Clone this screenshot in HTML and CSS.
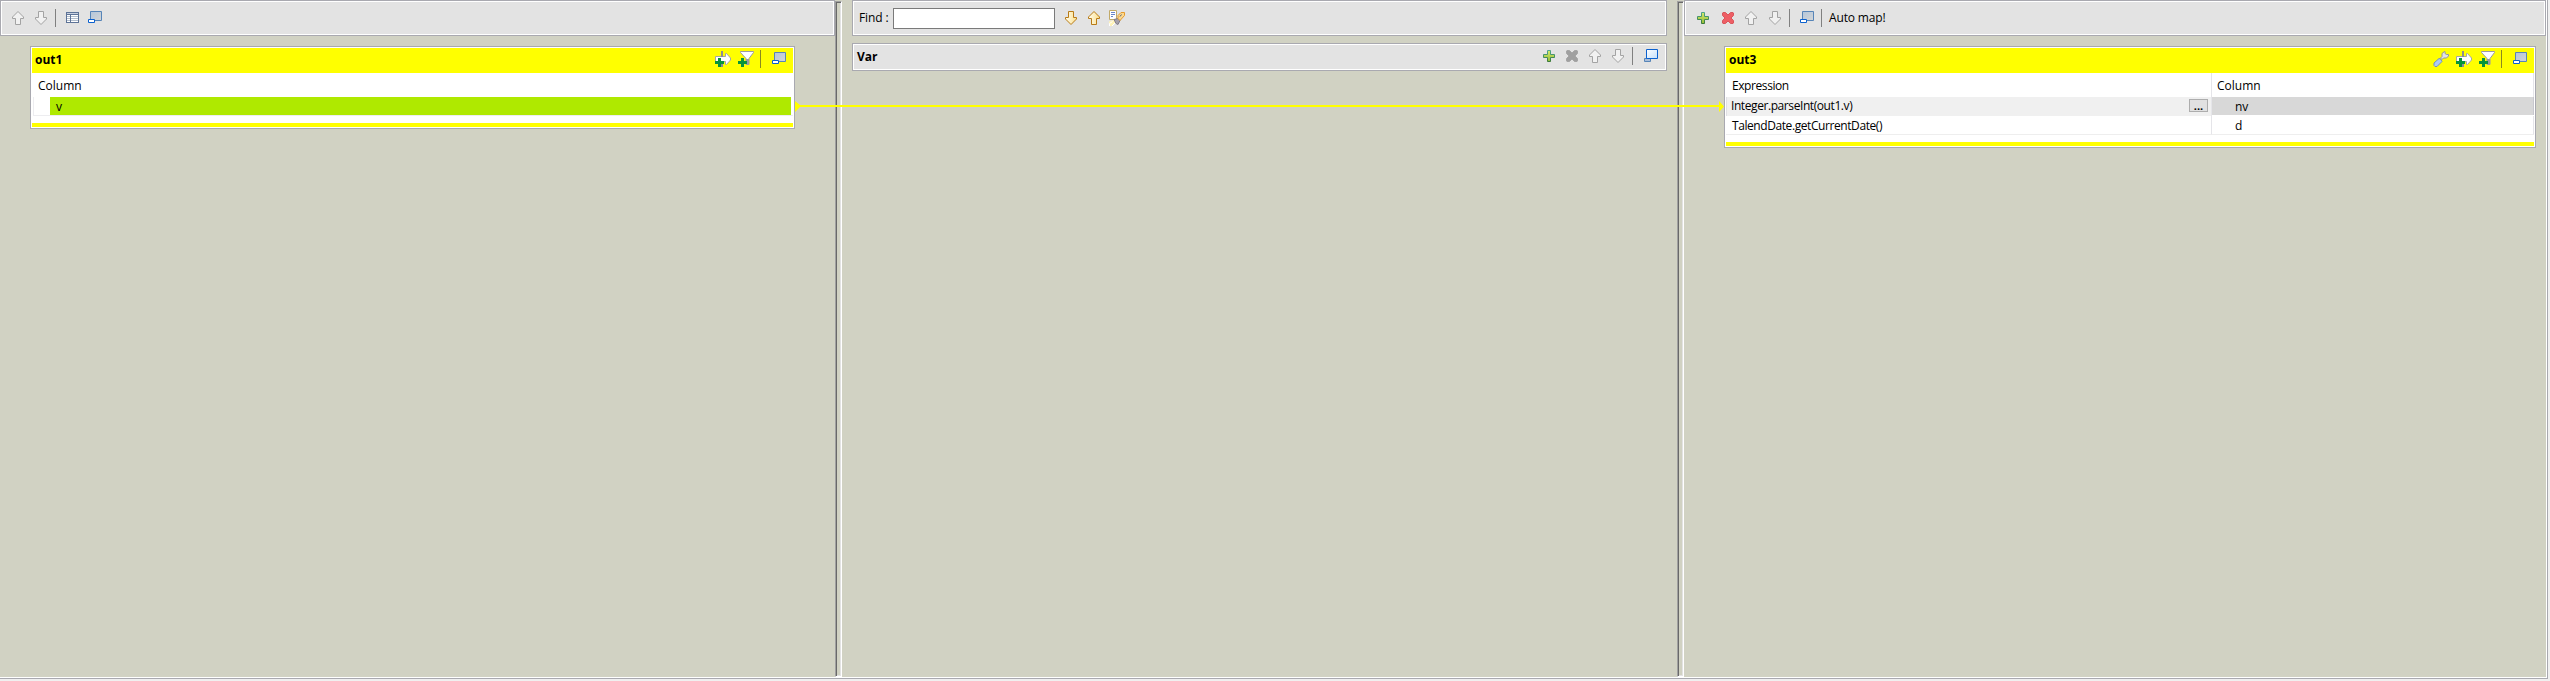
FILE: index.html
```html
<!DOCTYPE html>
<html lang="en">
<head>
<meta charset="utf-8">
<title>Map editor</title>
<link rel="stylesheet" href="styles.css">
</head>
<body>
<svg class="defs" width="0" height="0" aria-hidden="true">
  <defs>
    <linearGradient id="gold" x2="1"><stop offset="0" stop-color="#fffdf0"/><stop offset="1" stop-color="#fbdf8c"/></linearGradient>
    <linearGradient id="green" x2="0" y2="1"><stop offset="0" stop-color="#d5ea6c"/><stop offset="1" stop-color="#94bb35"/></linearGradient>
    <linearGradient id="greenEdge" x2="0" y2="1"><stop offset="0" stop-color="#4fa58c"/><stop offset="1" stop-color="#3b7a3b"/></linearGradient>
    <linearGradient id="pane" x2="1" y2="1"><stop offset="0" stop-color="#b4c6da"/><stop offset="1" stop-color="#d3d5d6"/></linearGradient>
    <linearGradient id="paneOn" x2="1" y2="1"><stop offset="0" stop-color="#ffffff"/><stop offset="1" stop-color="#c4e0fb"/></linearGradient>
    <symbol id="up" viewBox="0 0 16 16"><path d="M8 1.500 13.500 7v1.500h-3v6h-5v-6h-3V7z"/></symbol>
    <symbol id="down" viewBox="0 0 16 16"><path d="M8 14.500 13.500 9V7.500h-3v-6h-5v6h-3V9z"/></symbol>
    <symbol id="plus" viewBox="0 0 16 16"><path d="M6.500 2.500h3v4h4v3h-4v4h-3v-4h-4v-3h4z" fill="url(#green)" stroke="url(#greenEdge)"/></symbol>
    <symbol id="cross" viewBox="0 0 16 16"><path d="M3 2.500h2.500L8 5l2.500-2.500H13l.5.5v2.500L11 8l2.500 2.500V13l-.5.5h-2.500L8 11l-2.500 2.500H3l-.5-.5v-2.500L5 8 2.500 5.500V3z"/></symbol>
    <symbol id="table" viewBox="0 0 16 16"><path d="M2 2h13v11H2z" fill="#5d7397"/><path d="M3 3h11v1H3z" fill="#c6cfde"/><path d="M3 5h3v7H3zM7 5h7v7H7z" fill="#fff"/><path d="M3 6.500h3m1 0h7m-11 2h3m1 0h7m-11 2h3m1 0h7" stroke="#b1bdcc" fill="none"/></symbol>
    <symbol id="win" viewBox="0 0 16 16"><path d="M3.500 1.500h11v9h-11z" fill="url(#pane)" stroke="#5785b8"/><path d="M1.500 9.500h6v3h-6z" fill="#fff" stroke="#0b61cf"/></symbol>
    <symbol id="winOn" viewBox="0 0 16 16"><path d="M1.500 10.500h6v3h-6z" fill="#a9bdd8" stroke="#5785b8"/><path d="M3.500 1.500h11v9h-11z" fill="url(#paneOn)" stroke="#0b61cf"/></symbol>
    <symbol id="tool" viewBox="0 0 16 16"><path d="M11.500.5 9 2.500v3L7.500 7l1.500 1.500L10.500 7h3l2-2v-1.500h-2l-1.500-1V.5z" fill="#e2e3e6" stroke="#92949b"/><path d="M6 7.500 1 12v2.500l1 1h2l5-5-1.500-2.500z" fill="#adc9f2" stroke="#6f8fc4"/></symbol>
    <symbol id="addvar" viewBox="0 0 16 16"><path d="M7 0v16" stroke="#8e8e93" stroke-width="2"/><path d="M.5 5.500h10v-3h1l4 4.500v2l-4 4.500h-1v-3H.5z" fill="#fff" stroke="#a4a4a8"/><path d="M7 0v6" stroke="#8e8e93" stroke-width="2"/><path d="M3 7h3v3h3v3H6v3H3v-3H0v-3h3z" fill="#07943a"/></symbol>
    <symbol id="filter" viewBox="0 0 16 16"><path d="M2.500.5h13v1L11 7.500v6H8v-6L2.500 1.500z" fill="#fff" stroke="#9a9aa3"/><path d="M9.500 8v6" stroke="#9a9aa3" stroke-width="3"/><path d="M3 7h3v3h3v3H6v3H3v-3H0v-3h3z" fill="#07943a"/></symbol>
    <symbol id="torch" viewBox="0 0 16 16"><path d="M.5.5h7v9h-7z" fill="#fff" stroke="#c2aa68"/><path d="M2 2.500h4m-4 2h4m-4 2h2" stroke="#6a86c8"/><path d="M0 11.500 5 10l2 2-3.500 4H0z" fill="#fff3b8"/><path d="M.5 16v-2.500l3-2M3 16l3-3" stroke="#fff" fill="none"/><path d="m5 9.500 4-1 2 2-2 4-2-1z" fill="#a5a1ab" stroke="#827d8a"/><path d="M9 5.500 12 2.500h3.500v3l-4.500 5L9 8.500z" fill="#fbd78e" stroke="#e59a2c"/><path d="M11 6.500 12.500 4.500" stroke="#52617a"/></symbol>
  </defs>
</svg>

<main class="mapper">
  <section class="pane pane-in">
    <div class="bar tools tools-in">
      <svg class="icon dim"><use href="#up"/></svg>
      <svg class="icon dim g7"><use href="#down"/></svg>
      <i class="sep"></i>
      <svg class="icon g8"><use href="#table"/></svg>
      <svg class="icon g7"><use href="#win"/></svg>
    </div>
    <article class="card card-in">
      <header class="title"><b>out1</b>
        <svg class="icon push"><use href="#addvar"/></svg>
        <svg class="icon g7"><use href="#filter"/></svg>
        <i class="sep"></i>
        <svg class="icon g10"><use href="#win"/></svg>
      </header>
      <div class="body-in">
        <div class="head">Column</div>
        <div class="line"><span class="match">v</span></div>
      </div>
      <div class="foot"></div>
    </article>
  </section>
  <div class="sash"></div>
  <section class="pane pane-var">
    <div class="bar tools tools-find">
      <label class="find" for="find">Find :</label>
      <input id="find" class="field" type="text">
      <svg class="icon gold g8"><use href="#down"/></svg>
      <svg class="icon gold g7"><use href="#up"/></svg>
      <svg class="icon g7"><use href="#torch"/></svg>
    </div>
    <div class="bar var"><b>Var</b>
      <svg class="icon push"><use href="#plus"/></svg>
      <svg class="icon off g7"><use href="#cross"/></svg>
      <svg class="icon dim g7"><use href="#up"/></svg>
      <svg class="icon dim g7"><use href="#down"/></svg>
      <i class="sep"></i>
      <svg class="icon g10"><use href="#winOn"/></svg>
    </div>
  </section>
  <div class="sash"></div>
  <section class="pane pane-out">
    <div class="bar tools tools-out">
      <svg class="icon"><use href="#plus"/></svg>
      <svg class="icon red g9"><use href="#cross"/></svg>
      <svg class="icon dim g7"><use href="#up"/></svg>
      <svg class="icon dim g8"><use href="#down"/></svg>
      <i class="sep"></i>
      <svg class="icon g9"><use href="#win"/></svg>
      <i class="sep"></i>
      <span class="auto">Auto map!</span>
    </div>
    <article class="card card-out">
      <header class="title"><b>out3</b>
        <svg class="icon push"><use href="#tool"/></svg>
        <svg class="icon g7"><use href="#addvar"/></svg>
        <svg class="icon g7"><use href="#filter"/></svg>
        <i class="sep"></i>
        <svg class="icon g10"><use href="#win"/></svg>
      </header>
      <div class="grid">
        <div class="cell h tight">Expression</div>
        <div class="cell h c2">Column</div>
        <div class="cell active tight"><span>Integer.parseInt(out1.v)</span><button class="more">...</button></div>
        <div class="cell c2 chosen">nv</div>
        <div class="cell last tight">TalendDate.getCurrentDate()</div>
        <div class="cell c2 last">d</div>
      </div>
      <div class="foot"></div>
    </article>
  </section>
  <svg class="link" width="929" height="12" viewBox="0 0 929 12"><path d="M0 0 5 4h919V0l5 5.500-5 5.500V6H5L0 11z"/></svg>
</main>
</body>
</html>
```

FILE: styles.css
```css
* { box-sizing: border-box; }
body {
  margin: 0;
  height: 681px;
  overflow: hidden;
  background: #f0f0f0;
  color: #000;
  font: 12px/16px "Open Sans", "Noto Sans", sans-serif;
}
.defs { position: absolute; }
.mapper {
  position: relative;
  display: flex;
  width: 2548px;
  height: 679px;
  background: #d1d2c3;
  border: solid #a9a9b0;
  border-width: 0 1px 1px 0;
  box-shadow: inset -1px -1px #fff;
}
.pane { display: flex; flex-direction: column; }
.pane-in { width: 835px; }
.pane-var { width: 835px; padding: 0 10px; gap: 7px; }
.pane-out { width: 862px; }
.sash {
  width: 7px;
  height: 676px;
  margin-top: 1px;
  border: 1px solid;
  border-color: #a0a0a0 #fff #fff #a0a0a0;
  box-shadow: inset 1px 1px #696969, inset -1px -1px #e3e3e3;
}
.bar {
  display: flex;
  align-items: center;
  background: #e3e3e3;
  border: 1px solid #a9a9b0;
  box-shadow: inset 0 0 0 1px #fff;
}
.tools { height: 36px; }
.tools-in { padding-left: 9px; }
.tools-find { padding-left: 6px; }
.tools-out { padding-left: 10px; }
.var { height: 28px; padding: 0 7px 2px 4px; }
.var b { padding-top: 1px; }
.icon { flex: none; width: 16px; height: 16px; fill: none; }
.dim { fill: #f1f1f1; stroke: #a3a3a3; }
.gold { fill: url(#gold); stroke: #b97b16; }
.red { fill: #ee5f65; stroke: #d9565c; }
.off { fill: #a0a0a0; stroke: #a6a6a6; }
.g7 { margin-left: 7px; }
.g8 { margin-left: 8px; }
.g9 { margin-left: 9px; }
.g10 { margin-left: 10px; }
.push { margin-left: auto; }
.sep { width: 1px; height: 18px; margin-left: 6px; background: #808080; }
.find { width: 34px; white-space: nowrap; letter-spacing: -.1px; }
.field { width: 162px; height: 21px; padding: 0 3px; background: #fff; border: 1px solid #7a7a7a; }
.auto { margin-left: 7px; letter-spacing: -.15px; }
.card { background: #fff; border: 1px solid #a9a9b0; padding: 1px; }
.card-in { width: 765px; height: 83px; margin: 10px 0 0 30px; }
.card-out { width: 812px; height: 102px; margin: 10px 0 0 40px; }
.title {
  display: flex;
  align-items: center;
  height: 25px;
  padding: 0 6px 3px 3px;
  background: #ff0;
}
.title b { padding-top: 2px; }
.title .sep { background: #8a8a20; }
.head { height: 24px; padding: 5px 6px 3px; }
.body-in { height: 50px; }
.line { height: 19px; margin-left: 1px; padding: 0 1px 0 17px; border-bottom: 1px solid #ededf0; box-shadow: inset 1px 0 #ededf0; }
.match { display: block; height: 18px; width: 741px; padding: 2px 6px 0; background: #afe900; }
.foot { height: 4px; background: #ff0; }
.grid {
  display: grid;
  grid-template-columns: 486px 322px;
  grid-template-rows: 24px 19px 19px 7px;
  height: 69px;
}
.cell { display: flex; align-items: center; padding-left: 6px; border-right: 1px solid #e5e5e9; }
.cell.tight { letter-spacing: -.42px; }
.cell.h { padding-top: 1px; }
.cell.c2 { padding-left: 23px; }
.cell.h.c2 { padding-left: 5px; }
.cell.active { padding: 0 3px 1px 4px; background: #f0f0f0; border-left: 1px solid #e0e0e4; }
.cell.chosen { height: 18px; padding-top: 2px; background: #d8d8d8; border-color: #c8c8ce; }
.cell.last { padding-top: 2px; border-bottom: 1px solid #eee; }
.more {
  width: 19px;
  height: 13px;
  margin: -2px 0 0 auto;
  padding: 0;
  background: #e1e1e1;
  border: 1px solid #adadad;
  font: bold 11px/11px "Open Sans", sans-serif;
}
.link { position: absolute; left: 795px; top: 101px; fill: #ff0; }
```
